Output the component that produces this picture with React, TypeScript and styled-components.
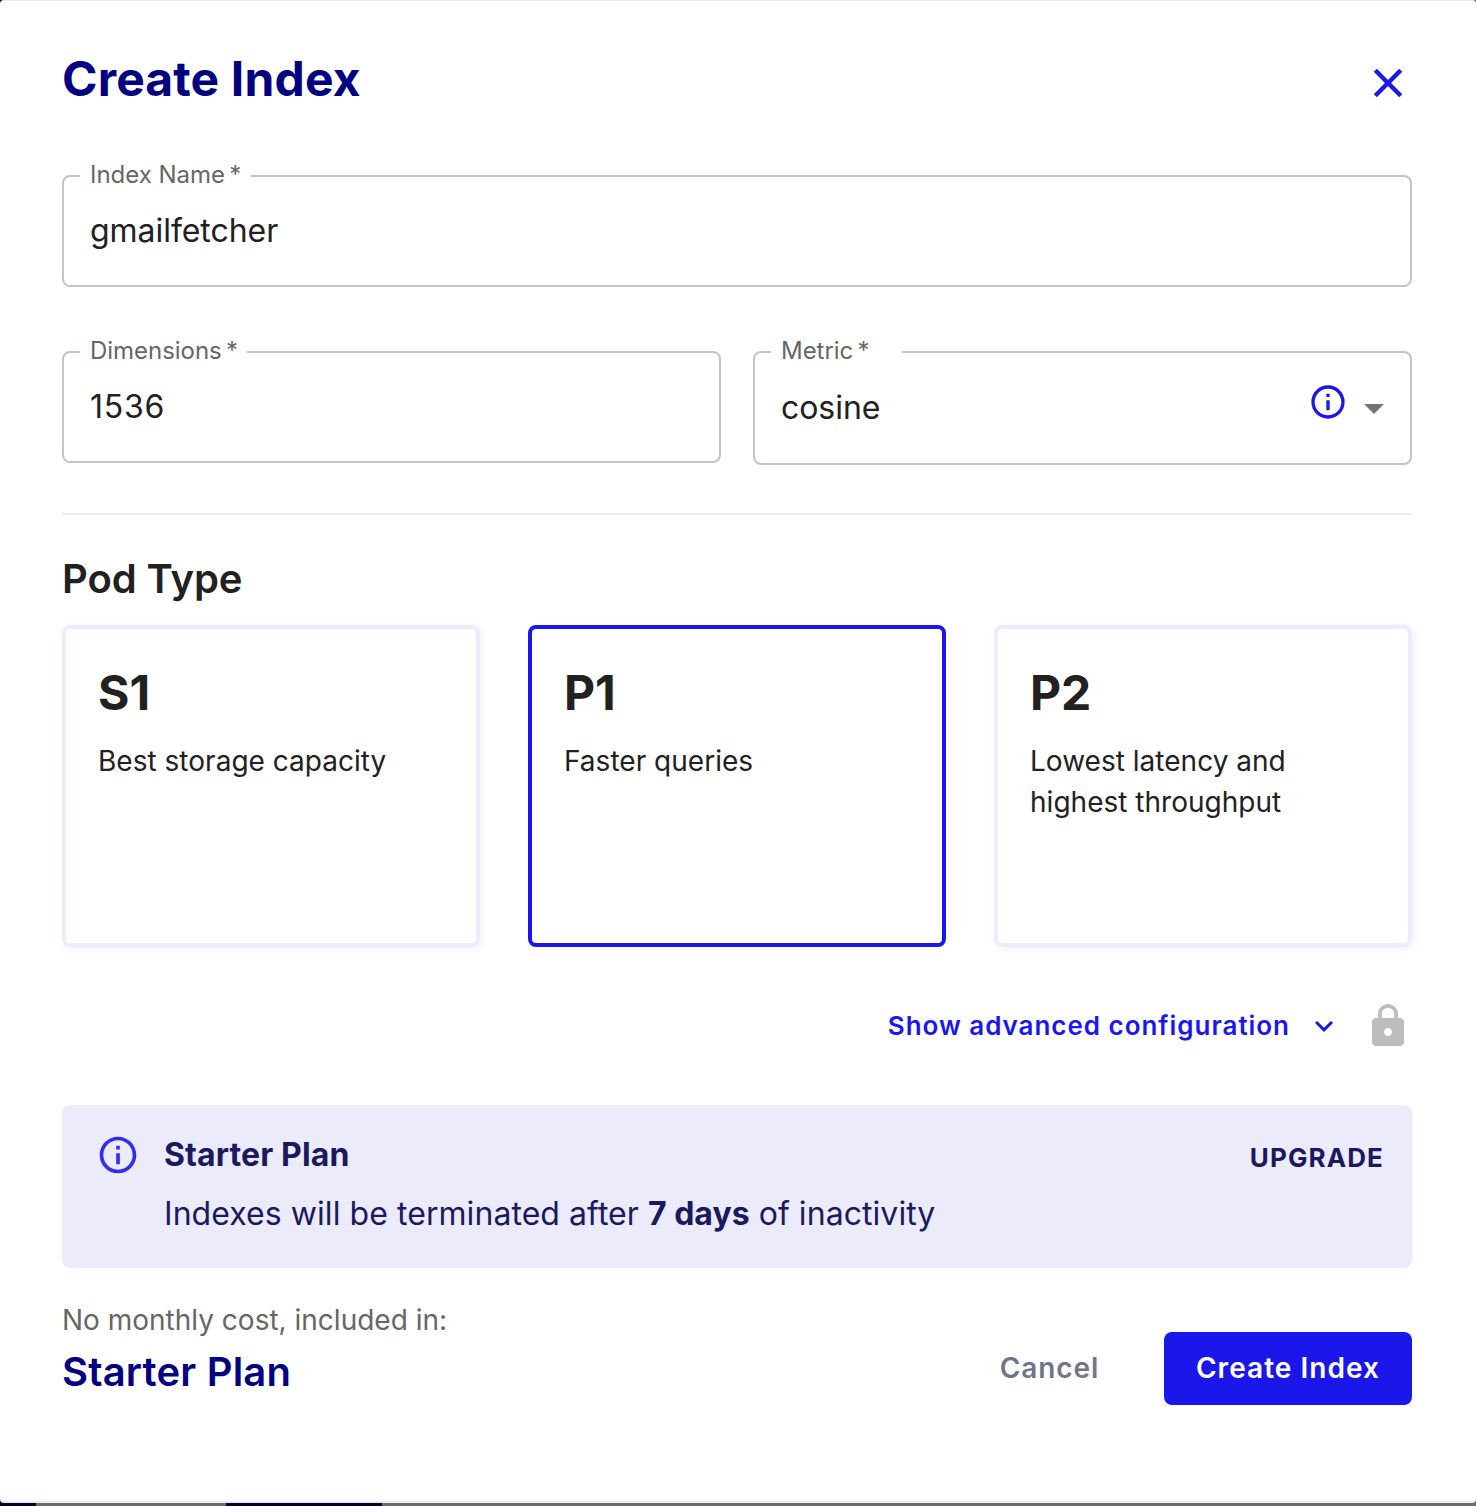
import React from "react";
import styled, { createGlobalStyle } from "styled-components";

const GlobalStyle = createGlobalStyle`
  *, *::before, *::after { box-sizing: border-box; }
  body { margin: 0; background: #6e6e6e; font-family: Inter, "Liberation Sans", sans-serif; color: #212121; }
  button { font-family: inherit; border: 0; background: none; padding: 0; margin: 0; cursor: pointer; }
  h2, h3, h4, p { margin: 0; }
`;

const Backdrop = styled.div`
  width: 1476px;
  height: 1506px;
  overflow: hidden;
  display: flex;
  flex-direction: column;
  background: linear-gradient(90deg, #07051c 0 36px, #6e6e6e 36px 226px, #07051c 226px 382px, #6e6e6e 382px);
`;

const Dialog = styled.section`
  height: 1503px;
  display: flex;
  flex-direction: column;
  padding: 50px 64px 0 62px;
  background: #fff;
  border: solid #e9ebfb;
  border-width: 1px 0 2px;
  border-radius: 4px;
`;

const Header = styled.header`
  display: flex;
  justify-content: space-between;
  align-items: flex-end;
  height: 56px;
`;

const Title = styled.h2`
  font-size: 48px;
  line-height: 56px;
  font-weight: 700;
  letter-spacing: 0.14px;
  color: #000080;
`;

const Glyph = styled.svg<{ $size: number; $color: string; $weight: number }>`
  display: block;
  flex: none;
  width: ${(p) => p.$size}px;
  height: ${(p) => p.$size}px;
  fill: ${(p) => p.$color};
  stroke: ${(p) => p.$color};
  stroke-width: ${(p) => p.$weight};
`;

const Form = styled.form`
  display: flex;
  flex-direction: column;
  gap: 51px;
  margin-top: 55px;
`;

const FieldRow = styled.div`
  display: grid;
  grid-template-columns: 1fr 1fr;
  align-items: start;
  gap: 32px;
`;

const Outline = styled.fieldset<{ $height: number }>`
  min-width: 0;
  margin: 0;
  padding: 0 12px 0 16px;
  height: ${(p) => p.$height}px;
  border: 2px solid #c4c4c4;
  border-radius: 8px;
`;

const Label = styled.legend<{ $width: number }>`
  width: ${(p) => p.$width}px;
  padding: 1px 0 3px 10px;
  font-size: 24px;
  line-height: 24px;
  letter-spacing: -0.03px;
  white-space: nowrap;
  color: #666;
`;

const Value = styled.div<{ $height: number; $numeric?: boolean }>`
  display: flex;
  align-items: center;
  height: ${(p) => p.$height}px;
  padding-left: 10px;
  font-size: 32px;
  letter-spacing: ${(p) => (p.$numeric ? 0.75 : -0.05)}px;
`;

const Adornments = styled.div`
  display: flex;
  align-items: center;
  gap: 2px;
  margin-left: auto;
`;

const InfoButton = styled.span`
  padding-bottom: 12px;
`;

const Divider = styled.hr`
  width: 100%;
  height: 2px;
  margin: 48px 0 0;
  border: 0;
  background: #ebedfd;
`;

const SectionTitle = styled.h3`
  margin-top: 40px;
  font-size: 40px;
  line-height: 48px;
  font-weight: 600;
  letter-spacing: -0.07px;
`;

const Pods = styled.div`
  display: grid;
  grid-template-columns: repeat(3, 1fr);
  gap: 48px;
  margin-top: 22px;
`;

const PodCard = styled.article<{ $selected?: boolean }>`
  height: 322px;
  padding: 36px 32px;
  border: 4px solid ${(p) => (p.$selected ? "#1b17ea" : "#ebedfd")};
  border-radius: 8px;
  box-shadow: ${(p) => (p.$selected ? "none" : "2px 2px 8px rgba(0, 0, 0, 0.06)")};
`;

const PodName = styled.h4`
  font-size: 48px;
  line-height: 56px;
  font-weight: 700;
`;

const PodText = styled.p`
  margin-top: 20px;
  font-size: 28px;
  line-height: 41px;
  letter-spacing: 0.02px;
`;

const Advanced = styled.div`
  display: flex;
  justify-content: flex-end;
  align-items: center;
  height: 48px;
  margin-top: 55px;
`;

const AdvancedToggle = styled.button`
  display: flex;
  align-items: center;
  gap: 16px;
  margin-right: 22px;
  font-size: 26px;
  font-weight: 600;
  letter-spacing: 0.97px;
  color: #1b17ea;
`;

const ToggleText = styled.span`
  padding-bottom: 1px;
`;

const Banner = styled.aside`
  display: flex;
  height: 163px;
  margin-top: 55px;
  padding: 28px 28px 0 34px;
  border-radius: 8px;
  background: #ecebfc;
  color: #1b1a5e;
`;

const BannerBody = styled.div`
  flex: 1;
  margin-left: 24px;
`;

const BannerTitle = styled.h4`
  font-size: 32px;
  line-height: 44px;
  font-weight: 700;
  letter-spacing: 0.12px;
`;

const BannerText = styled.p`
  margin-top: 15px;
  font-size: 32px;
  line-height: 44px;
  letter-spacing: 0.06px;

  b {
    letter-spacing: 0;
  }
`;

const Upgrade = styled.button`
  align-self: flex-start;
  margin-top: 1px;
  font-size: 26px;
  line-height: 48px;
  font-weight: 700;
  letter-spacing: 1.1px;
  color: #1b1a5e;
`;

const Footer = styled.footer`
  display: flex;
  height: 105px;
  margin-top: 32px;
`;

const Cost = styled.div`
  flex: 1;
`;

const CostNote = styled.p`
  font-size: 28px;
  line-height: 40px;
  color: #666;
`;

const CostPlan = styled.p`
  margin-top: 8px;
  font-size: 40px;
  line-height: 48px;
  font-weight: 600;
  letter-spacing: 0.18px;
  color: #000080;
`;

const Action = styled.button<{ $primary?: boolean }>`
  align-self: flex-end;
  width: ${(p) => (p.$primary ? 248 : 163)}px;
  height: 73px;
  margin-left: ${(p) => (p.$primary ? 33 : 0)}px;
  padding-bottom: 1px;
  border-radius: 8px;
  font-size: 28px;
  font-weight: 600;
  letter-spacing: ${(p) => (p.$primary ? 1.05 : 0.9)}px;
  color: ${(p) => (p.$primary ? "#fff" : "#72758a")};
  background: ${(p) => (p.$primary ? "#1b17ea" : "transparent")};
`;

const ICONS = {
  close:
    "M19 6.41 17.59 5 12 10.59 6.41 5 5 6.41 10.59 12 5 17.59 6.41 19 12 13.41 17.59 19 19 17.59 13.41 12z",
  info: "M11 7h2v2h-2zm0 4h2v6h-2zm1-9C6.48 2 2 6.48 2 12s4.48 10 10 10 10-4.48 10-10S17.52 2 12 2zm0 18c-4.41 0-8-3.59-8-8s3.59-8 8-8 8 3.59 8 8-3.59 8-8 8z",
  caret: "M7 10l5 5 5-5z",
  chevron: "M7.41 8.59 12 13.17l4.59-4.58L18 10l-6 6-6-6 1.41-1.41z",
  lock: "M18 8h-1V6c0-2.76-2.24-5-5-5S7 3.24 7 6v2H6c-1.1 0-2 .9-2 2v10c0 1.1.9 2 2 2h12c1.1 0 2-.9 2-2V10c0-1.1-.9-2-2-2zm-6 9c-1.1 0-2-.9-2-2s.9-2 2-2 2 .9 2 2-.9 2-2 2zm3.1-9H8.9V6c0-1.71 1.39-3.1 3.1-3.1 1.71 0 3.1 1.39 3.1 3.1v2z",
};

interface IconProps {
  name: keyof typeof ICONS;
  size: number;
  color: string;
  weight?: number;
}

function Icon({ name, size, color, weight = 0 }: IconProps) {
  return (
    <Glyph $size={size} $color={color} $weight={weight} viewBox="0 0 24 24" aria-hidden="true">
      <path d={ICONS[name]} />
    </Glyph>
  );
}

interface FieldProps {
  label: string;
  notch: number;
  value: string;
  numeric?: boolean;
  tall?: boolean;
  children?: React.ReactNode;
}

function Field({ label, notch, value, numeric, tall, children }: FieldProps) {
  return (
    <Outline $height={tall ? 127 : 125}>
      <Label $width={notch}>{label}&thinsp;*</Label>
      <Value $height={tall ? 83 : 81} $numeric={numeric}>
        {value}
        {children}
      </Value>
    </Outline>
  );
}

const PODS = [
  { name: "S1", text: "Best storage capacity" },
  { name: "P1", text: "Faster queries", selected: true },
  { name: "P2", text: "Lowest latency and highest throughput" },
];

export default function App() {
  return (
    <>
      <GlobalStyle />
      <Backdrop>
        <Dialog>
          <Header>
            <Title>Create Index</Title>
            <button aria-label="Close">
              <Icon name="close" size={48} color="#1b17ea" weight={0.25} />
            </button>
          </Header>
          <Form>
            <Field label="Index Name" notch={171} value="gmailfetcher" />
            <FieldRow>
              <Field label="Dimensions" notch={167} value="1536" numeric />
              <Field label="Metric" notch={131} value="cosine" tall>
                <Adornments>
                  <InfoButton>
                    <Icon name="info" size={40} color="#1b17ea" />
                  </InfoButton>
                  <Icon name="caret" size={48} color="#757575" />
                </Adornments>
              </Field>
            </FieldRow>
          </Form>
          <Divider />
          <SectionTitle>Pod Type</SectionTitle>
          <Pods>
            {PODS.map((pod) => (
              <PodCard key={pod.name} $selected={pod.selected}>
                <PodName>{pod.name}</PodName>
                <PodText>{pod.text}</PodText>
              </PodCard>
            ))}
          </Pods>
          <Advanced>
            <AdvancedToggle>
              <ToggleText>Show advanced configuration</ToggleText>
              <Icon name="chevron" size={36} color="#1b17ea" />
            </AdvancedToggle>
            <Icon name="lock" size={48} color="#bdbdbd" />
          </Advanced>
          <Banner>
            <Icon name="info" size={44} color="#312ef2" />
            <BannerBody>
              <BannerTitle>Starter Plan</BannerTitle>
              <BannerText>
                Indexes will be terminated after <b>7 days</b> of inactivity
              </BannerText>
            </BannerBody>
            <Upgrade>UPGRADE</Upgrade>
          </Banner>
          <Footer>
            <Cost>
              <CostNote>No monthly cost, included in:</CostNote>
              <CostPlan>Starter Plan</CostPlan>
            </Cost>
            <Action>Cancel</Action>
            <Action $primary>Create Index</Action>
          </Footer>
        </Dialog>
      </Backdrop>
    </>
  );
}
